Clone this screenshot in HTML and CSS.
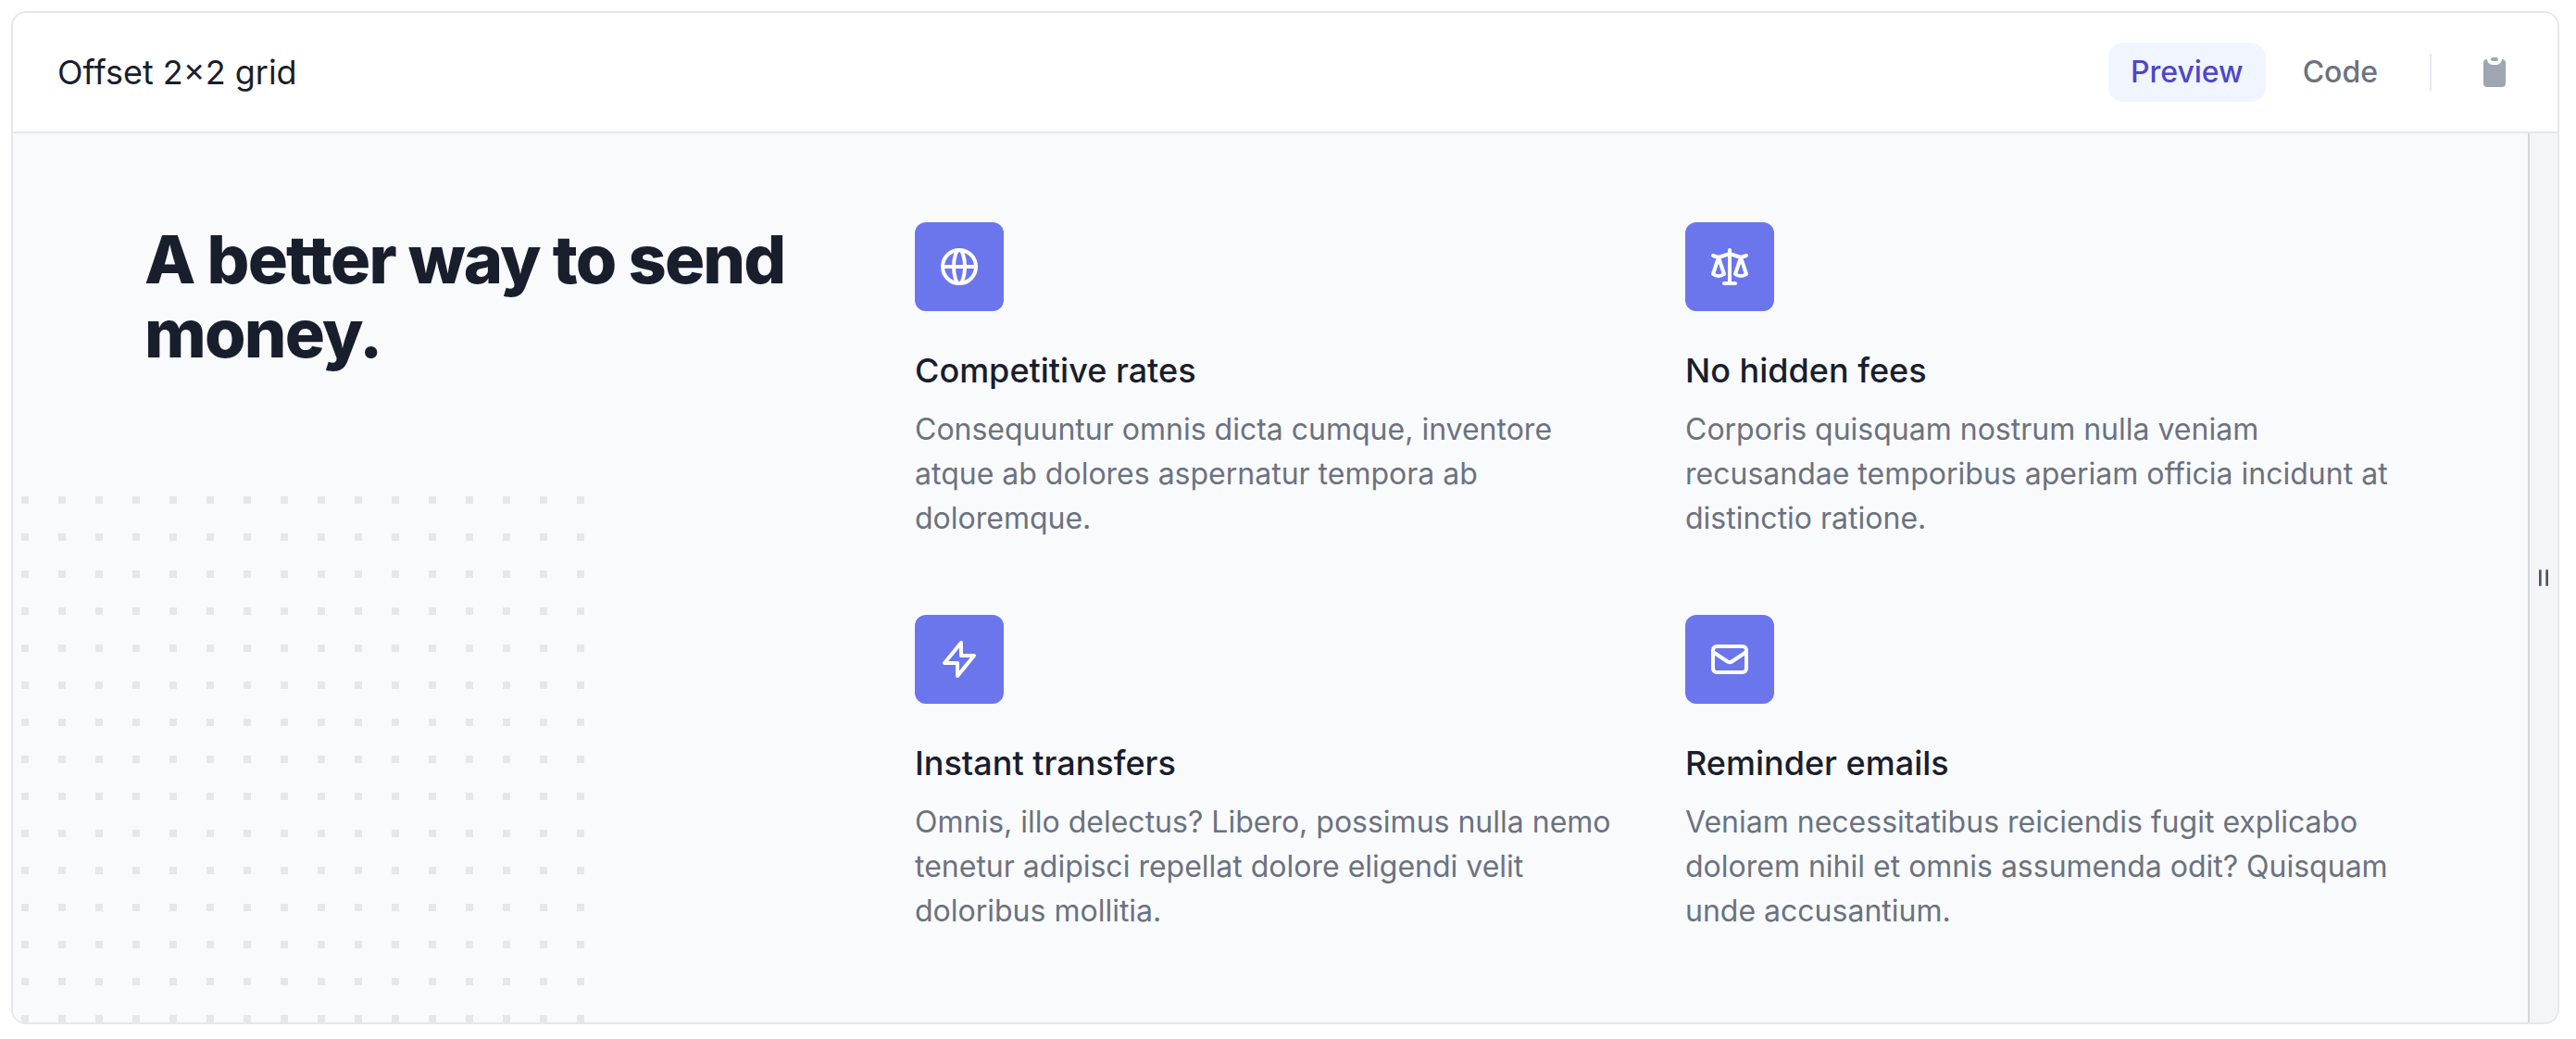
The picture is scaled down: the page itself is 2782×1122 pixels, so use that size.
FILE: index.html
```html
<!DOCTYPE html>
<html lang="en">
<head>
<meta charset="utf-8">
<meta name="viewport" content="width=device-width, initial-scale=1">
<title>Offset 2×2 grid</title>
<link rel="stylesheet" href="styles.css">
</head>
<body>
<main class="card">
  <header class="card-header">
    <h1 class="card-title">Offset 2×2 grid</h1>
    <div class="toolbar">
      <div class="tabs">
        <button type="button" class="tab tab-active" aria-pressed="true">Preview</button>
        <button type="button" class="tab" aria-pressed="false">Code</button>
      </div>
      <span class="divider"></span>
      <button type="button" class="copy" aria-label="Copy code">
        <svg viewBox="0 0 20 20" fill="currentColor" aria-hidden="true"><path d="M8 3a1 1 0 011-1h2a1 1 0 110 2H9a1 1 0 01-1-1z"/><path d="M6 3a2 2 0 00-2 2v11a2 2 0 002 2h8a2 2 0 002-2V5a2 2 0 00-2-2 3 3 0 01-3 3H9a3 3 0 01-3-3z"/></svg>
      </button>
    </div>
  </header>
  <div class="stage">
    <section class="preview">
      <svg class="dots" aria-hidden="true">
        <defs>
          <pattern id="dot-grid" width="40" height="40" patternUnits="userSpaceOnUse"><rect width="8" height="8" fill="#e5e7eb"/></pattern>
        </defs>
        <rect width="100%" height="100%" fill="url(#dot-grid)"/>
      </svg>
      <div class="container">
        <h2 class="headline">A better way to send money.</h2>
        <div class="features">
          <article class="feature">
            <div class="feature-icon">
              <svg viewBox="0 0 24 24" aria-hidden="true"><path d="M21 12a9 9 0 01-9 9m9-9a9 9 0 00-9-9m9 9H3m9 9a9 9 0 01-9-9m9 9c1.657 0 3-4.03 3-9s-1.343-9-3-9m0 18c-1.657 0-3-4.03-3-9s1.343-9 3-9m-9 9a9 9 0 019-9"/></svg>
            </div>
            <h3 class="feature-title">Competitive rates</h3>
            <p class="feature-text">Consequuntur omnis dicta cumque, inventore atque ab dolores aspernatur tempora ab doloremque.</p>
          </article>
          <article class="feature">
            <div class="feature-icon">
              <svg viewBox="0 0 24 24" aria-hidden="true"><path d="M3 6l3 1m0 0l-3 9a5.002 5.002 0 006.001 0M6 7l3 9M6 7l6-2m6 2l3-1m-3 1l-3 9a5.002 5.002 0 006.001 0M18 7l3 9m-3-9l-6-2m0-2v2m0 16V5m0 16H9m3 0h3"/></svg>
            </div>
            <h3 class="feature-title">No hidden fees</h3>
            <p class="feature-text">Corporis quisquam nostrum nulla veniam recusandae temporibus aperiam officia incidunt at distinctio ratione.</p>
          </article>
          <article class="feature">
            <div class="feature-icon">
              <svg viewBox="0 0 24 24" aria-hidden="true"><path d="M13 10V3L4 14h7v7l9-11h-7z"/></svg>
            </div>
            <h3 class="feature-title">Instant transfers</h3>
            <p class="feature-text">Omnis, illo delectus? Libero, possimus nulla nemo tenetur adipisci repellat dolore eligendi velit doloribus mollitia.</p>
          </article>
          <article class="feature">
            <div class="feature-icon">
              <svg viewBox="0 0 24 24" aria-hidden="true"><path d="M3 8l7.89 5.26a2 2 0 002.22 0L21 8M5 19h14a2 2 0 002-2V7a2 2 0 00-2-2H5a2 2 0 00-2 2v10a2 2 0 002 2z"/></svg>
            </div>
            <h3 class="feature-title">Reminder emails</h3>
            <p class="feature-text">Veniam necessitatibus reiciendis fugit explicabo dolorem nihil et omnis assumenda odit? Quisquam unde accusantium.</p>
          </article>
        </div>
      </div>
    </section>
    <button type="button" class="resizer" aria-label="Resize preview">
      <svg viewBox="0 0 30 54" fill="currentColor" aria-hidden="true"><path d="M0 1h8v52H0zM22 1h8v52h-8z"/></svg>
    </button>
  </div>
</main>
</body>
</html>
```
FILE: styles.css
```css
*,
*::before,
*::after {
  box-sizing: border-box;
}

body {
  margin: 0;
  padding: 12px 18px 16px 12px;
  background: #fff;
  color: #191e2d;
  font-family: Inter, "Liberation Sans", sans-serif;
  font-size: 32px;
  line-height: 48px;
}

h1,
h2,
h3,
p {
  margin: 0;
}

button {
  margin: 0;
  border: 0;
  background: none;
  font: inherit;
  cursor: pointer;
}

svg {
  display: block;
}

.card {
  overflow: hidden;
  border: 2px solid #e5e7eb;
  border-radius: 16px;
}

.card-header {
  display: flex;
  flex-wrap: wrap;
  align-items: center;
  justify-content: space-between;
  padding: 32px 48px;
  border-bottom: 2px solid #e5e7eb;
}

.card-title {
  font-size: 36px;
  font-weight: 400;
}

.toolbar {
  display: flex;
  align-items: center;
}

.tabs {
  display: flex;
  gap: 16px;
}

.tab {
  padding: 8px 24px;
  border-radius: 16px;
  color: #6b7280;
  font-weight: 500;
}

.tab-active {
  background: #f0f5ff;
  color: #4f46c8;
}

.divider {
  width: 2px;
  height: 40px;
  margin: 0 48px 0 32px;
  background: #e5e7eb;
}

.copy {
  padding: 0;
  color: #9fa6b2;
}

.copy svg {
  width: 40px;
  height: 40px;
}

.stage {
  display: flex;
}

.preview {
  position: relative;
  flex: 1;
  min-width: 0;
  overflow: hidden;
  background: #f9fafc;
}

/* Decorative pattern behind the headline column */
.dots {
  position: absolute;
  top: 392px;
  left: 9px;
  width: 608px;
  height: 100%;
}

.container {
  position: relative;
  display: grid;
  grid-template-columns: 1fr 2fr;
  grid-template-columns: repeat(3, minmax(0, 1fr));
  gap: 64px;
  max-width: 2560px;
  margin: 0 auto;
  padding: 96px 64px;
}

.headline {
  font-size: 72px;
  font-weight: 800;
  line-height: 80px;
  letter-spacing: -0.025em;
}

.features {
  display: grid;
  grid-column: span 2;
  grid-template-columns: repeat(2, minmax(0, 1fr));
  gap: 80px 64px;
}

.feature-icon {
  display: flex;
  align-items: center;
  justify-content: center;
  width: 96px;
  height: 96px;
  border-radius: 12px;
  background: #6b76ed;
  color: #fff;
}

.feature-icon svg {
  width: 48px;
  height: 48px;
  fill: none;
  stroke: currentColor;
  stroke-width: 2;
  stroke-linecap: round;
  stroke-linejoin: round;
}

.feature-title {
  margin-top: 40px;
  font-size: 36px;
  font-weight: 500;
}

.feature-text {
  margin-top: 16px;
  color: #6b7280;
}

.resizer {
  display: flex;
  align-items: center;
  justify-content: center;
  width: 32px;
  padding: 0;
  border-left: 2px solid #d2d6dc;
  background: #f4f5f7;
  color: #4b5563;
}

.resizer svg {
  width: 10px;
  height: 18px;
}

@media (max-width: 1800px) {
  .container {
    grid-template-columns: minmax(0, 1fr);
  }

  .features {
    grid-column: auto;
  }
}

@media (max-width: 1000px) {
  .features {
    grid-template-columns: minmax(0, 1fr);
  }
}
```
